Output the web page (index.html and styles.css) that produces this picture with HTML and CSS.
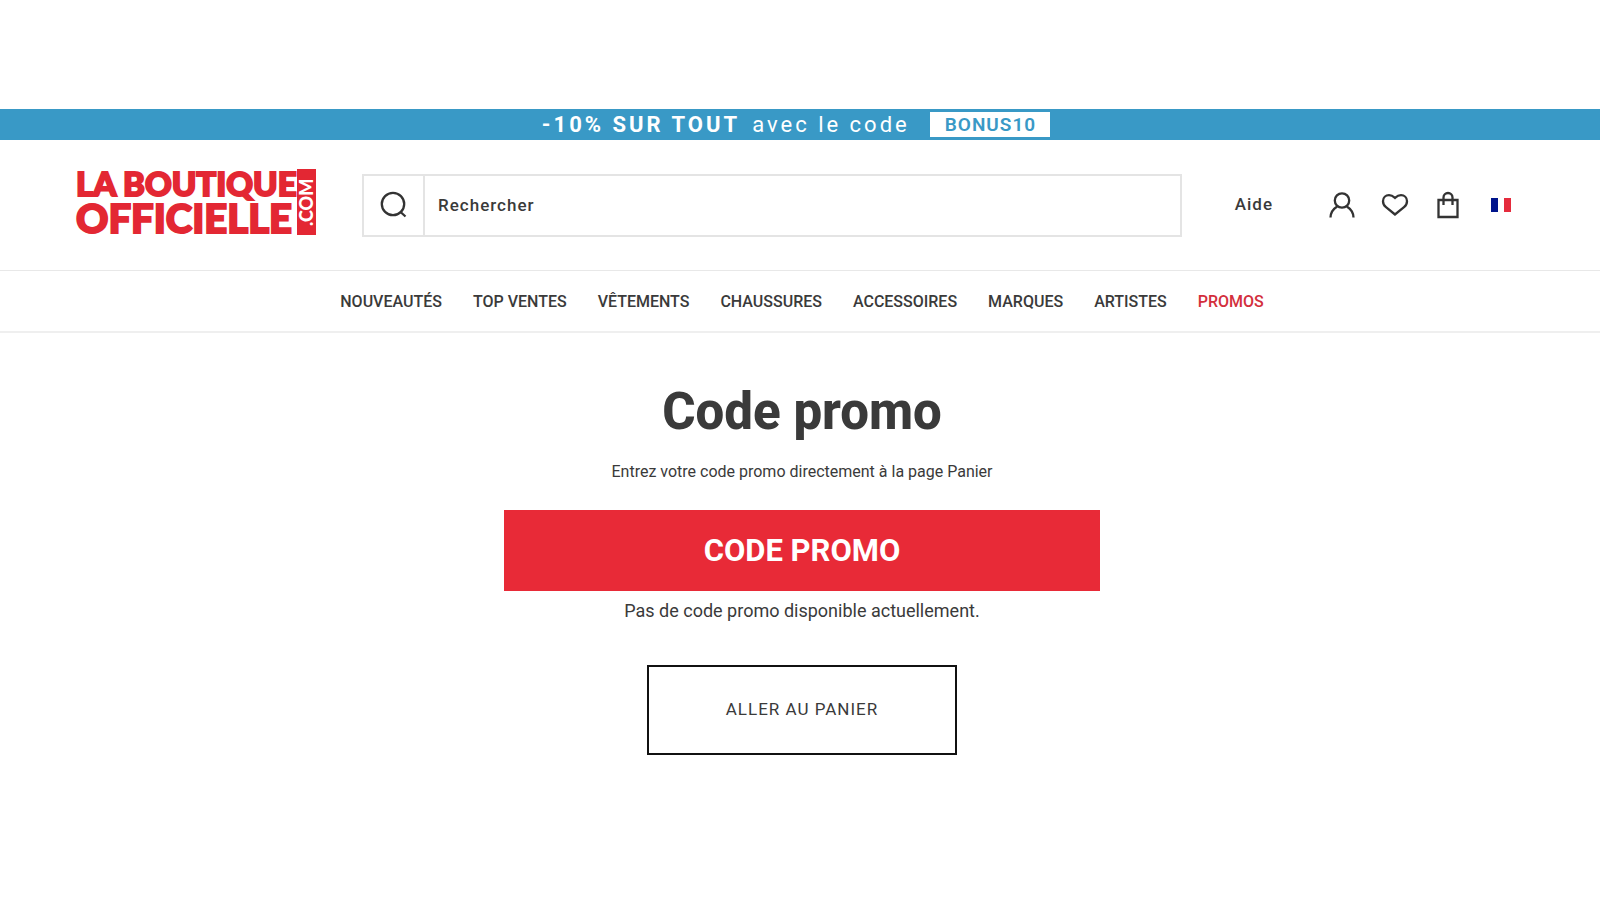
FILE: index.html
```html
<!DOCTYPE html>
<html lang="fr">
<head>
  <meta charset="UTF-8" />
  <meta name="viewport" content="width=device-width, initial-scale=1.0"/>
  <title>Code promo - La Boutique Officielle</title>

  <link rel="stylesheet" href="styles.css">
</head>
<body>
  <div class="banner">
    <strong>-10% SUR TOUT</strong>
    <span>avec le code</span>
    <span class="banner-code">BONUS10</span>
  </div>

  <header class="header">
    <a class="logo" href="#">
      <span class="logo-name">
        <span class="logo-top">LA BOUTIQUE</span>
        <span class="logo-bottom">OFFICIELLE</span>
      </span>
      <span class="logo-com">.COM</span>
    </a>

    <form class="search">
      <button type="submit" aria-label="Lancer la recherche">
        <svg width="28" height="28" viewBox="0 0 28 28">
          <circle cx="13" cy="13" r="11.2"/>
          <path d="M20 20.500l5.500 5"/>
        </svg>
      </button>
      <input type="text" placeholder="Rechercher" aria-label="Rechercher" />
    </form>

    <a class="help" href="#">Aide</a>

    <div class="icons">
      <a href="#" aria-label="Mon compte">
        <svg width="28" height="28" viewBox="0 0 28 28">
          <circle cx="14" cy="9.500" r="7.200"/>
          <path d="M2.500 26.500c.2-5 2.600-8.500 6.700-11M25.500 26.500c-.2-5-2.600-8.500-6.700-11"/>
        </svg>
      </a>
      <a href="#" aria-label="Mes favoris">
        <svg width="28" height="28" viewBox="0 0 28 28">
          <path d="M14 23.500L5 16.200C2.800 14.400 2 12.500 2 10.200 2 6.500 4.800 4.200 8 4.200c2.400 0 3.800.8 6 2.700 2.200-1.900 3.600-2.700 6-2.700 3.200 0 6 2.300 6 6 0 2.300-.8 4.200-3 6z"/>
        </svg>
      </a>
      <a href="#" aria-label="Mon panier">
        <svg width="28" height="28" viewBox="0 0 28 28">
          <path d="M4.500 9h19v17h-19zM9.500 14V6.500a4.500 4.500 0 0 1 9 0V14"/>
        </svg>
      </a>
      <a href="#" aria-label="France">
        <svg class="flag" width="28" height="28" viewBox="0 0 28 28">
          <path fill="#00148c" d="M4 7h7v14H4z"/>
          <path fill="#e52b3d" d="M17 7h7v14h-7z"/>
        </svg>
      </a>
    </div>
  </header>

  <nav class="menu">
    <a href="#">NOUVEAUTÉS</a>
    <a href="#">TOP VENTES</a>
    <a href="#">VÊTEMENTS</a>
    <a href="#">CHAUSSURES</a>
    <a href="#">ACCESSOIRES</a>
    <a href="#">MARQUES</a>
    <a href="#">ARTISTES</a>
    <a class="promos" href="#">PROMOS</a>
  </nav>

  <main class="promo">
    <h1>Code promo</h1>
    <p class="intro">Entrez votre code promo directement à la page Panier</p>
    <h2>CODE PROMO</h2>
    <p class="empty">Pas de code promo disponible actuellement.</p>
    <button class="cart-button" type="button">ALLER AU PANIER</button>
  </main>
</body>
</html>
```

FILE: styles.css
```css
:root {
  --red: #e82a37;
  --logo-red: #e32733;
  --blue: #3999c6;
  --text-color: #3a3a3a;
  --border-color: #e4e4e4;
}

* {
  box-sizing: border-box;
}

body {
  margin: 0;
  padding-top: 109px;
  background-color: #fff;
  color: var(--text-color);
  font-family: Roboto, sans-serif;
  font-size: 17px;
}

a {
  color: inherit;
  text-decoration: none;
}

.banner {
  display: flex;
  justify-content: center;
  align-items: center;
  height: 31px;
  padding-right: 8px;
  background-color: var(--blue);
  color: #fff;
  font-size: 22px;
  letter-spacing: 3px;
}

.banner strong {
  margin-right: 12px;
}

.banner-code {
  margin-left: 20px;
  padding: 0 14px 0 15px;
  background-color: #fff;
  color: var(--blue);
  font-size: 19px;
  font-weight: 600;
  line-height: 25px;
  letter-spacing: 1px;
}

.header {
  display: flex;
  align-items: center;
  height: 130px;
  padding: 0 85px 0 76px;
}

.logo {
  display: flex;
  width: 240px;
  height: 66px;
  margin-bottom: 6px;
  justify-content: space-between;
  color: var(--logo-red);
  font-family: Lato, sans-serif;
  font-weight: 900;
}

.logo-name {
  display: flex;
  flex-direction: column;
  white-space: nowrap;
  -webkit-text-stroke: 2px var(--logo-red);
}

.logo-top {
  font-size: 33px;
  line-height: 29px;
}

.logo-bottom {
  font-size: 40px;
  line-height: 40px;
}

.logo-com {
  width: 19px;
  background-color: var(--logo-red);
  color: #fff;
  font-size: 18px;
  line-height: 19px;
  text-align: center;
  writing-mode: vertical-rl;
  transform: rotate(180deg);
}

.search {
  display: flex;
  flex: 1;
  height: 63px;
  margin-left: 46px;
  border: 2px solid var(--border-color);
}

.search button {
  display: flex;
  justify-content: center;
  align-items: center;
  width: 61px;
  padding: 0;
  border: none;
  border-right: 2px solid var(--border-color);
  background: none;
  cursor: pointer;
}

.search input {
  flex: 1;
  min-width: 0;
  padding: 0 13px;
  border: none;
  outline: none;
  font: inherit;
  font-weight: 500;
  letter-spacing: 1px;
}

.search input::placeholder {
  color: var(--text-color);
  opacity: 1;
}

svg {
  display: block;
  fill: none;
  stroke: #333;
  stroke-width: 2.3;
}

.flag {
  stroke: none;
}

.help {
  margin-left: 53px;
  padding-bottom: 2px;
  font-weight: 500;
  letter-spacing: 1px;
}

.icons {
  display: flex;
  gap: 25px;
  margin-left: 55px;
}

.menu {
  display: flex;
  justify-content: center;
  align-items: center;
  gap: 31px;
  height: 63px;
  padding-left: 4px;
  border-top: 1px solid #e8e8e8;
  border-bottom: 2px solid #efefef;
  font-size: 16px;
  font-weight: 500;
}

.promos {
  color: #d32f3c;
}

.promo {
  display: flex;
  flex-direction: column;
  align-items: center;
  padding: 47px 0 48px 4px;
}

h1 {
  margin: 0 0 16px;
  font-size: 51px;
  font-weight: 800;
  line-height: 64px;
}

p {
  margin: 0;
  line-height: 24px;
}

.intro {
  font-size: 16px;
}

h2 {
  width: 100%;
  max-width: 596px;
  margin: 26px 0 8px;
  background-color: var(--red);
  color: #fff;
  font-size: 31px;
  line-height: 81px;
  text-align: center;
}

.empty {
  font-size: 18px;
}

.cart-button {
  width: 310px;
  height: 90px;
  margin-top: 42px;
  padding-bottom: 4px;
  border: 2px solid #111;
  background: none;
  color: var(--text-color);
  font: inherit;
  letter-spacing: 1px;
  cursor: pointer;
}
```
